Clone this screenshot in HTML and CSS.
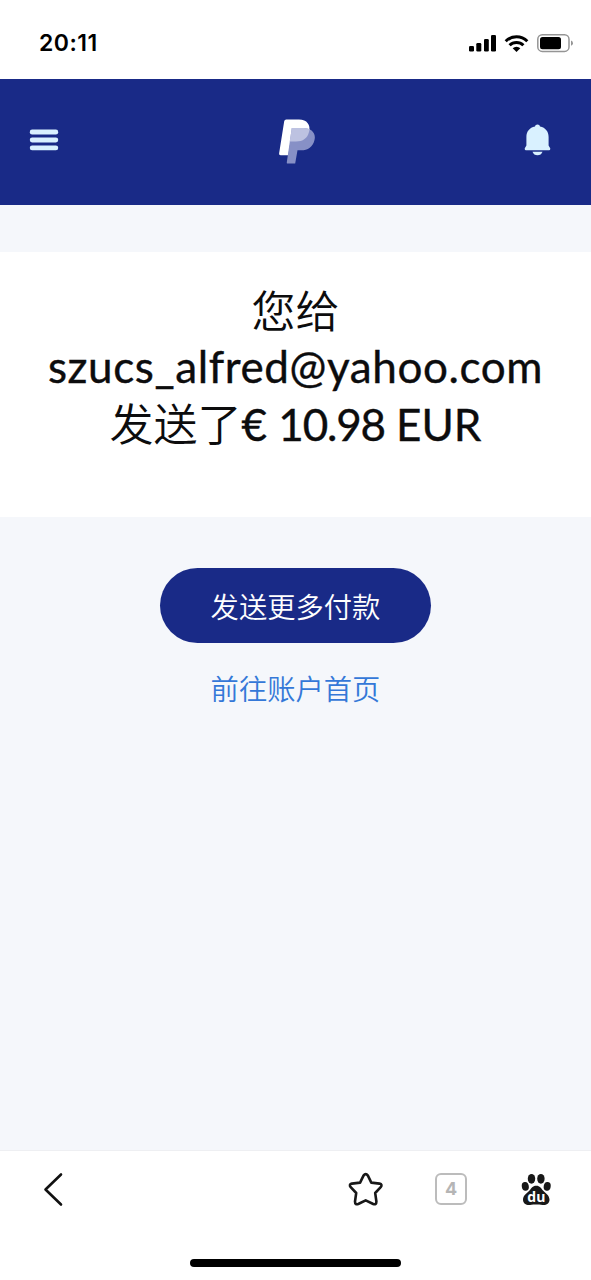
FILE: index.html
```html
<!DOCTYPE html>
<html lang="zh-CN">
<head>
<meta charset="utf-8">
<meta name="viewport" content="width=device-width, initial-scale=1">
<title>PayPal</title>
<link rel="stylesheet" href="styles.css">
</head>
<body>
<div class="screen">
  <div class="status">
    <span class="clock">20:11</span>
    <svg class="status-icons" width="106" height="20" viewBox="468 33 106 20" aria-hidden="true">
      <rect x="469" y="46" width="5" height="5.5" rx="1.3"/>
      <rect x="476.300" y="43" width="5" height="8.500" rx="1.300"/>
      <rect x="484" y="39" width="4.800" height="12.500" rx="1.300"/>
      <rect x="491" y="35" width="5" height="16.500" rx="1.300"/>
      <g fill="none" stroke="#000" stroke-width="3">
        <path d="M505.700 41.200A15.200 15.200 0 0 1 527.300 41.200"/>
        <path d="M509.600 45.300A9.800 9.800 0 0 1 523.400 45.300"/>
      </g>
      <path d="M512.700 48.300A5.400 5.400 0 0 1 520.300 48.300L516.500 52Z"/>
      <rect x="537.800" y="34.800" width="31.200" height="16.600" rx="4.500" fill="none" stroke="#959595" stroke-width="1.500"/>
      <rect x="540" y="37" width="21" height="12.200" rx="2.500"/>
      <path d="M571 40.500Q573 41.300 573 43.200Q573 45 571 45.800Z" fill="#959595"/>
    </svg>
  </div>
  <header class="topbar">
    <svg width="30" height="22" viewBox="0 0 30 22" fill="#d9f1ff" role="img" aria-label="菜单">
      <rect x=".8" y=".6" width="28.400" height="4.900" rx="2.300"/><rect x=".8" y="8.500" width="28.400" height="4.900" rx="2.300"/><rect x=".8" y="16.400" width="28.400" height="4.900" rx="2.300"/>
    </svg>
    <svg class="logo" width="38" height="46" viewBox="278 118 38 46" role="img" aria-label="PayPal">
      <path d="M286.300 119.500H299C307 119.500 311 125 309 132C307.400 138.300 303 141.500 296 141.500H290.500L288.300 155.300H280.600Q278.800 155.300 279.100 153.500L284.200 121.200Q284.500 119.500 286.300 119.500Z" fill="#fff"/>
      <path d="M291.800 128H303.500C311 128 316.300 133 314.500 140C312.900 147 308 150.300 301 150.300H297.500L295.200 163.500H287.600Q286.600 163.500 286.800 162.300Z" fill="#8790c6"/>
      <path d="M291.800 128H303.500Q307 128 309.700 129.300L309 132C307.400 138.300 303 141.500 296 141.500H289.700Z" fill="#bdc2e1"/>
    </svg>
    <svg width="28" height="32" viewBox="523 124 28 32" fill="#d9f1ff" role="img" aria-label="通知">
      <path d="M535 126.500C535.200 123.700 539.800 123.700 540 126.500C545.600 127.700 548.600 131.500 548.600 137V145.500L550.200 148.300Q550.600 150.200 549 150.200H526Q524.400 150.200 524.800 148.300L526.400 145.500V137C526.400 131.500 529.400 127.700 535 126.500Z"/>
      <path d="M532.500 151.700H542.500Q541.200 155.300 537.500 155.300Q533.800 155.300 532.500 151.700Z"/>
    </svg>
  </header>
  <section class="receipt">
    <h1><span>您给</span><span class="email">szucs_alfred@yahoo.com</span><span class="sent">发送了<span class="amount">€ <span class="digits">10.98</span> EUR</span></span></h1>
  </section>
  <main class="actions">
    <a class="more">发送更多付款</a>
    <a class="home">前往账户首页</a>
  </main>
  <footer class="browser">
    <nav class="tools">
      <svg class="back" width="22" height="36" viewBox="43 1170 22 36" role="img" aria-label="返回"><path d="M61 1173.500L45.500 1188.500L61 1203.500" fill="none" stroke="#111" stroke-width="2.600" stroke-linecap="round" stroke-linejoin="round"/></svg>
      <svg class="star" width="36" height="34" viewBox="348 1171 36 34" role="img" aria-label="收藏"><path d="M363.500 1174.600Q365.700 1171.700 367.900 1174.600L371.300 1181.600L379.500 1182.600Q382.800 1183.500 380.700 1186.200L375.200 1192L376.400 1200.500Q376.400 1204 373.200 1203L365.700 1199.300L358.200 1203Q355 1204 355 1200.500L356.200 1192L350.700 1186.200Q348.600 1183.500 351.900 1182.600L360.100 1181.600Z" fill="none" stroke="#181818" stroke-width="2.600" stroke-linejoin="round"/></svg>
      <span class="tabs">4</span>
      <svg class="baidu" width="32" height="34" viewBox="520 1171 32 34" role="img" aria-label="百度" fill="#181818">
        <ellipse cx="531.500" cy="1177.800" rx="3.700" ry="4.900"/><ellipse cx="540.900" cy="1177.800" rx="3.700" ry="4.900"/>
        <ellipse cx="525.300" cy="1185.400" rx="3.500" ry="4.400" transform="rotate(-10 525.300 1185.400)"/><ellipse cx="547.200" cy="1185.400" rx="3.500" ry="4.400" transform="rotate(10 547.200 1185.400)"/>
        <path d="M536.200 1184.800C540 1184.800 541 1187.500 543 1189.500C545.500 1192 549.500 1194.500 549.500 1198.700C549.500 1202.500 546 1204.400 542.500 1203.900C538 1203.400 534.500 1203.400 530 1203.900C526.500 1204.400 523 1202.500 523 1198.700C523 1194.500 527 1192 529.500 1189.500C531.500 1187.500 532.500 1184.800 536.200 1184.800Z"/>
        <text class="du" x="536.300" y="1200.700" text-anchor="middle" fill="#fff">du</text>
      </svg>
    </nav>
    <div class="indicator"></div>
  </footer>
</div>
</body>
</html>
```
FILE: styles.css
```css
body { margin: 0; font-family: "Noto Sans CJK SC", sans-serif; }
.screen { width: 591px; height: 1280px; display: flex; flex-direction: column; background: #f5f7fb; overflow: hidden; }
.status { height: 79px; box-sizing: border-box; padding: 7px 17px 0 39px; display: flex; justify-content: space-between; align-items: center; background: #fff; }
.clock { font: 600 23px/28px Inter, sans-serif; letter-spacing: .5px; }
.status-icons { margin-bottom: 1px; }
.topbar { height: 126px; box-sizing: border-box; padding: 0 40px 5px 29px; display: grid; grid-template-columns: 30px 1fr 28px; align-items: center; justify-items: center; background: #192a87; }
.logo { margin: 3px 0 0 12px; }
.receipt { height: 265px; box-sizing: border-box; margin-top: 47px; padding-top: 29px; background: #fff; }
.receipt h1 { margin: 0; display: flex; flex-direction: column; align-items: center; color: #0c0c0d; font-size: 44px; line-height: 57px; font-weight: 350; white-space: nowrap; }
.email, .amount { font-family: Lato, sans-serif; font-weight: 400; -webkit-text-stroke: .4px #0c0c0d; }
.email { letter-spacing: .6px; }
.sent { margin-top: -1px; }
.digits { letter-spacing: -1.200px; }
.actions { flex: 1; padding-top: 51px; display: flex; flex-direction: column; align-items: center; font-size: 28.300px; font-weight: 350; }
.more { width: 271px; height: 75px; line-height: 75px; text-align: center; border-radius: 38px; color: #fff; background: #192a87; }
.home { margin-top: 25px; line-height: 40px; color: #3478d8; }
.browser { height: 130px; box-sizing: border-box; border-top: 1px solid #eeeff2; display: flex; flex-direction: column; align-items: center; background: #fff; }
.tools { align-self: stretch; height: 75px; padding: 0 39px 0 43px; display: flex; align-items: center; }
.star { margin-left: auto; }
.tabs { width: 32px; height: 32px; box-sizing: border-box; margin: 0 53px 0 51px; border: 2.500px solid #bcbcbc; border-radius: 6px; text-align: center; color: #b5b5b5; font: 700 18px/28px Inter, sans-serif; }
.du { font: 700 14px "Open Sans", sans-serif; }
.indicator { width: 211px; height: 8px; margin-top: 33px; border-radius: 4px; background: #000; }
```
